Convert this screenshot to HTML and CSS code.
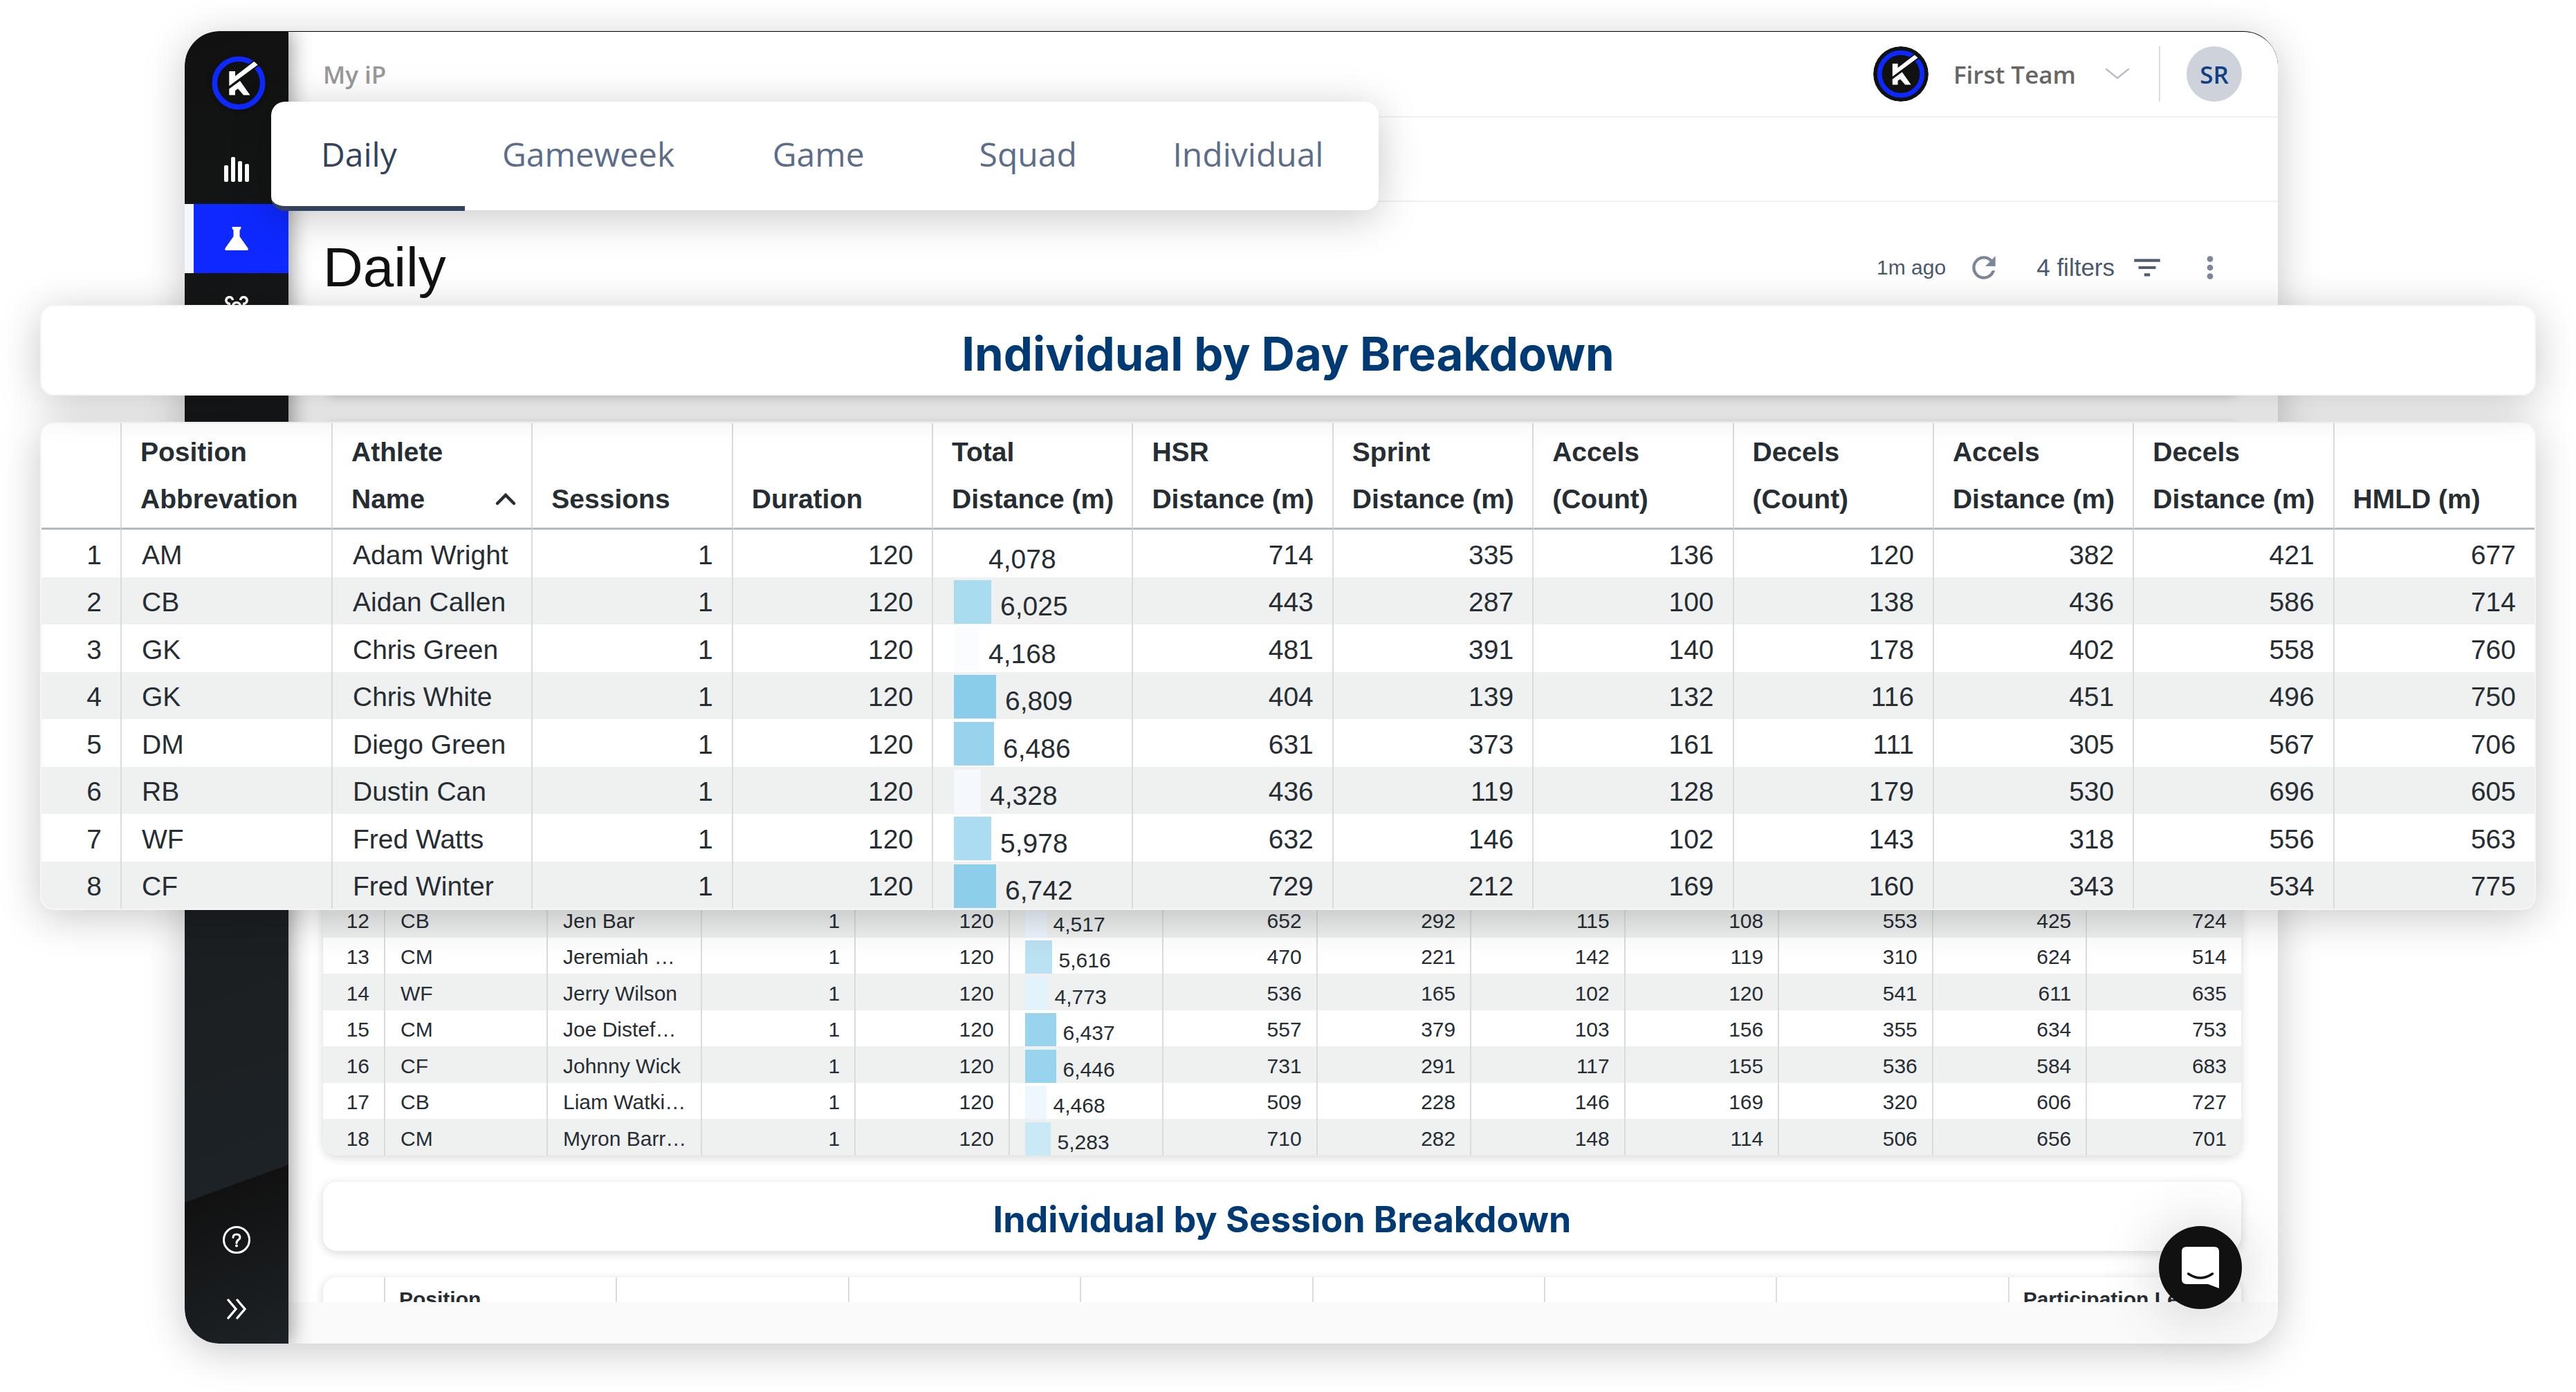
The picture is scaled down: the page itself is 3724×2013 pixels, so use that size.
FILE: index.html
```html
<!DOCTYPE html>
<html lang="en">
<head>
<meta charset="utf-8">
<title>Daily</title>
<link rel="stylesheet" href="styles.css">
</head>
<body>
<svg width="0" height="0" class="defs" aria-hidden="true">
  <symbol id="logo" viewBox="0 0 90 90">
    <circle cx="45" cy="45" r="45" fill="#111"/>
    <circle cx="45" cy="45" r="34.7" fill="none" stroke="#0d29ff" stroke-width="7.6"/>
    <path d="M40 35 67.300 14 72.700 18.700 31.300 49.300Z" fill="#111" stroke="#111" stroke-width="4"/>
    <path d="M31.300 28H40V35L67.300 14 72.700 18.700 31.300 49.300Z" fill="#fff"/>
    <path d="M31.300 53.500 47 42 61.500 62.500H52L44 53.300 40 56V62.500H31.300Z" fill="#fff"/>
  </symbol>
</svg>

<div class="window">
  <nav class="sidebar">
    <a class="brand" href="#"><svg width="90" height="90"><use href="#logo"/></svg></a>
    <a class="nav-item" href="#"><svg width="36" height="36" viewBox="0 0 36 36" fill="#fff"><rect x="0" y="12" width="6" height="24" rx="2"/><rect x="10" y="0" width="6" height="36" rx="2"/><rect x="20" y="6" width="6" height="30" rx="2"/><rect x="30" y="10" width="6" height="26" rx="2"/></svg></a>
    <a class="nav-item active" href="#"><svg width="34" height="34" viewBox="0 0 34 34" fill="#fff"><path d="M11 0H23Q24.500 1.500 21.500 5V14L33.500 31Q34.500 34 32 34H2Q-.5 34 .5 31L12.500 14V5Q9.500 1.500 11 0Z"/></svg></a>
    <a class="nav-item" href="#"><svg width="36" height="34" viewBox="0 0 36 34" fill="none" stroke="#fff" stroke-width="3.600"><path d="M9 11A4.800 4.800 0 1 1 12.500 6M27 11A4.800 4.800 0 1 0 23.500 6"/><circle cx="18" cy="15" r="5.500"/><path d="M4 32Q18 16 32 32"/></svg></a>
    <span class="spacer"></span>
    <a class="nav-item" href="#"><svg width="42" height="42" viewBox="0 0 42 42" fill="none" stroke="#fff" stroke-width="3"><circle cx="21" cy="21" r="18.500"/><path d="M16 17.500Q16 13 21 13T26 17.500C26 21 21 20.500 21 25.500" stroke-linecap="round"/><circle cx="21" cy="29.500" r="1" fill="#fff" stroke-width="2"/></svg></a>
    <a class="nav-item" href="#"><svg width="30" height="30" viewBox="0 0 30 30" fill="none" stroke="#fff" stroke-width="3.400" stroke-linecap="round"><path d="M3 2 14 15 3 28M16 2 27 15 16 28"/></svg></a>
  </nav>

  <main class="main">
    <header class="header">
      <span class="crumb">My iP</span>
      <svg class="team-logo" width="80" height="80"><use href="#logo"/></svg>
      <button class="team" type="button">First Team
        <svg width="36" height="18" viewBox="0 0 36 18" fill="none" stroke="#b9bfc4" stroke-width="2.500" stroke-linecap="round"><path d="M2 2 18 15 34 2"/></svg>
      </button>
      <span class="divider"></span>
      <button class="avatar" type="button">SR</button>
    </header>
    <div class="subheader"></div>

    <div class="toolbar">
      <h1>Daily</h1>
      <span class="ago">1m ago</span>
      <button class="refresh" type="button" aria-label="Refresh"><svg width="50" height="50" viewBox="0 0 24 24" fill="#7b8798"><path d="M17.650 6.350A7.960 7.960 0 0 0 12 4a8 8 0 1 0 7.730 10h-2.080A6 6 0 1 1 12 6c1.660 0 3.140.69 4.220 1.780L13 11h7V4z"/></svg></button>
      <button class="filters" type="button">4 filters <svg width="50" height="50" viewBox="0 0 24 24" fill="#505e73"><path d="M10 18h4v-2h-4zM3 6v2h18V6zm3 7h12v-2H6z"/></svg></button>
      <button type="button" aria-label="More"><svg width="50" height="50" viewBox="0 0 24 24" fill="#7b8798"><circle cx="12" cy="6" r="2.100"/><circle cx="12" cy="12" r="2.100"/><circle cx="12" cy="18" r="2.100"/></svg></button>
    </div>

    <div class="content">
      <div class="card banner"></div>
      <div class="card day-card">
        <table class="grid small">
          <colgroup><col class="c-num"><col class="c-pos"><col span="11"></colgroup>
          <tbody>
            <tr><td>12</td><td>CB</td><td>Jen Bar</td><td>1</td><td>120</td><td><div class="meter"><i style="width:31px;background:#edf6fe"></i><span>4,517</span></div></td><td>652</td><td>292</td><td>115</td><td>108</td><td>553</td><td>425</td><td>724</td></tr>
            <tr><td>13</td><td>CM</td><td>Jeremiah …</td><td>1</td><td>120</td><td><div class="meter"><i style="width:39px;background:#bbe2f3"></i><span>5,616</span></div></td><td>470</td><td>221</td><td>142</td><td>119</td><td>310</td><td>624</td><td>514</td></tr>
            <tr><td>14</td><td>WF</td><td>Jerry Wilson</td><td>1</td><td>120</td><td><div class="meter"><i style="width:33px;background:#e2f3fb"></i><span>4,773</span></div></td><td>536</td><td>165</td><td>102</td><td>120</td><td>541</td><td>611</td><td>635</td></tr>
            <tr><td>15</td><td>CM</td><td>Joe Distef…</td><td>1</td><td>120</td><td><div class="meter"><i style="width:45px;background:#99d4ee"></i><span>6,437</span></div></td><td>557</td><td>379</td><td>103</td><td>156</td><td>355</td><td>634</td><td>753</td></tr>
            <tr><td>16</td><td>CF</td><td>Johnny Wick</td><td>1</td><td>120</td><td><div class="meter"><i style="width:45px;background:#98d4ee"></i><span>6,446</span></div></td><td>731</td><td>291</td><td>117</td><td>155</td><td>536</td><td>584</td><td>683</td></tr>
            <tr><td>17</td><td>CB</td><td>Liam Watki…</td><td>1</td><td>120</td><td><div class="meter"><i style="width:31px;background:#eff7fe"></i><span>4,468</span></div></td><td>509</td><td>228</td><td>146</td><td>169</td><td>320</td><td>606</td><td>727</td></tr>
            <tr><td>18</td><td>CM</td><td>Myron Barr…</td><td>1</td><td>120</td><td><div class="meter"><i style="width:37px;background:#c9e9f7"></i><span>5,283</span></div></td><td>710</td><td>282</td><td>148</td><td>114</td><td>506</td><td>656</td><td>701</td></tr>
          </tbody>
        </table>
      </div>
      <h2 class="card banner">Individual by Session Breakdown</h2>
      <div class="card session-card">
        <table class="grid small session">
          <colgroup><col class="c-num"><col span="8"></colgroup>
          <thead><tr><th></th><th>Position</th><th></th><th></th><th></th><th></th><th></th><th></th><th>Participation Level</th></tr></thead>
        </table>
      </div>
    </div>
    <footer class="footer"></footer>
  </main>

  <button class="chat" type="button" aria-label="Open chat"><svg width="54" height="60" viewBox="0 0 54 60"><path d="M7 0H47Q54 0 54 7V60L38 54H7Q0 54 0 47V7Q0 0 7 0Z" fill="#fff"/><path d="M9.500 39Q27 51 44.500 39" fill="none" stroke="#111" stroke-width="3.400" stroke-linecap="round"/></svg></button>
</div>

<nav class="tabs">
  <a class="tab current" href="#">Daily</a>
  <a class="tab" href="#">Gameweek</a>
  <a class="tab" href="#">Game</a>
  <a class="tab" href="#">Squad</a>
  <a class="tab" href="#">Individual</a>
</nav>

<h2 class="float day-title">Individual by Day Breakdown</h2>

<div class="float day-table">
  <table class="grid large">
    <colgroup><col class="c-num"><col class="c-pos"><col span="11"></colgroup>
    <thead>
      <tr><th></th><th>Position<br>Abbrevation</th><th>Athlete<br><span class="sorted">Name <svg width="32" height="20" viewBox="0 0 32 20" fill="none" stroke="#262d33" stroke-width="4.500" stroke-linecap="round"><path d="M4 16 16 4 28 16"/></svg></span></th><th>Sessions</th><th>Duration</th><th>Total<br>Distance (m)</th><th>HSR<br>Distance (m)</th><th>Sprint<br>Distance (m)</th><th>Accels<br>(Count)</th><th>Decels<br>(Count)</th><th>Accels<br>Distance (m)</th><th>Decels<br>Distance (m)</th><th>HMLD (m)</th></tr>
    </thead>
    <tbody>
      <tr><td>1</td><td>AM</td><td>Adam Wright</td><td>1</td><td>120</td><td><div class="meter"><i style="width:37px;background:#ffffff"></i><span>4,078</span></div></td><td>714</td><td>335</td><td>136</td><td>120</td><td>382</td><td>421</td><td>677</td></tr>
      <tr><td>2</td><td>CB</td><td>Aidan Callen</td><td>1</td><td>120</td><td><div class="meter"><i style="width:54px;background:#aadcf0"></i><span>6,025</span></div></td><td>443</td><td>287</td><td>100</td><td>138</td><td>436</td><td>586</td><td>714</td></tr>
      <tr><td>3</td><td>GK</td><td>Chris Green</td><td>1</td><td>120</td><td><div class="meter"><i style="width:37px;background:#fbfcff"></i><span>4,168</span></div></td><td>481</td><td>391</td><td>140</td><td>178</td><td>402</td><td>558</td><td>760</td></tr>
      <tr><td>4</td><td>GK</td><td>Chris White</td><td>1</td><td>120</td><td><div class="meter"><i style="width:61px;background:#89cdea"></i><span>6,809</span></div></td><td>404</td><td>139</td><td>132</td><td>116</td><td>451</td><td>496</td><td>750</td></tr>
      <tr><td>5</td><td>DM</td><td>Diego Green</td><td>1</td><td>120</td><td><div class="meter"><i style="width:58px;background:#97d3ed"></i><span>6,486</span></div></td><td>631</td><td>373</td><td>161</td><td>111</td><td>305</td><td>567</td><td>706</td></tr>
      <tr><td>6</td><td>RB</td><td>Dustin Can</td><td>1</td><td>120</td><td><div class="meter"><i style="width:39px;background:#f5f9fe"></i><span>4,328</span></div></td><td>436</td><td>119</td><td>128</td><td>179</td><td>530</td><td>696</td><td>605</td></tr>
      <tr><td>7</td><td>WF</td><td>Fred Watts</td><td>1</td><td>120</td><td><div class="meter"><i style="width:54px;background:#acdcf1"></i><span>5,978</span></div></td><td>632</td><td>146</td><td>102</td><td>143</td><td>318</td><td>556</td><td>563</td></tr>
      <tr><td>8</td><td>CF</td><td>Fred Winter</td><td>1</td><td>120</td><td><div class="meter"><i style="width:61px;background:#8dcfeb"></i><span>6,742</span></div></td><td>729</td><td>212</td><td>169</td><td>160</td><td>343</td><td>534</td><td>775</td></tr>
    </tbody>
  </table>
</div>
</body>
</html>
```
FILE: styles.css
```css
* { box-sizing: border-box; }

body {
  position: relative;
  margin: 0;
  min-height: 100vh;
  padding: 45px 431px 70px 267px;
  background: #fff;
  color: #262d33;
  font-family: "Liberation Sans", Arial, sans-serif;
  overflow: hidden;
}

.defs { position: absolute; }
svg { display: block; flex: none; }
a { color: inherit; text-decoration: none; }
h1, h2 { margin: 0; }

button {
  padding: 0;
  border: 0;
  background: none;
  color: inherit;
  font: inherit;
  cursor: pointer;
}

/* application window */
.window {
  position: relative;
  display: flex;
  height: calc(100vh - 115px);
  border-radius: 50px;
  background: #fff;
  box-shadow: 0 10px 60px rgba(0, 0, 0, .22);
}

.sidebar {
  z-index: 1;
  display: flex;
  flex: none;
  flex-direction: column;
  width: 150px;
  border-radius: 50px 0 0 50px;
  background: linear-gradient(160deg, #111 0, #151718 25%, #1d2226 86.7%, #111 86.8%, #1d2226 100%);
  box-shadow: 4px 0 30px rgba(0, 0, 0, .4);
  clip-path: inset(0 -60px 0 0 round 50px 0 0 50px);
}

.brand, .nav-item {
  display: flex;
  align-items: center;
  justify-content: center;
  height: 100px;
}
.brand { height: 150px; padding-left: 6px; }
.nav-item.active {
  background: #0d29ff;
  box-shadow: inset 13px 0 #f4f8fc;
}
.spacer { flex: 1; }

.main {
  display: flex;
  flex: 1;
  flex-direction: column;
  min-width: 0;
  border-top: 1px solid #000;
  border-radius: 0 50px 50px 0;
  overflow: hidden;
}

.header {
  display: flex;
  flex: none;
  align-items: center;
  height: 124px;
  padding: 0 52px 0 50px;
  border-bottom: 2px solid #f1f1f1;
  font-family: "Open Sans", sans-serif;
  font-size: 35px;
}
.crumb { color: #999; font-weight: 600; }
.team-logo { margin-left: auto; border-radius: 50%; }
.team {
  display: flex;
  align-items: center;
  gap: 42px;
  margin: 0 42px 0 36px;
  color: #666;
  font-weight: 600;
}
.divider { width: 2px; height: 80px; margin-right: 38px; background: #dcdcdc; }
.avatar {
  width: 80px;
  height: 80px;
  border-radius: 50%;
  background: #ced3db;
  color: #0f3f84;
  font-weight: 600;
}

.subheader { flex: none; height: 122px; border-bottom: 2px solid #f1f1f1; }

.toolbar {
  display: flex;
  flex: none;
  align-items: center;
  height: 179px;
  padding: 10px 73px 0 50px;
  color: #4a586e;
}
.toolbar h1 { margin-right: auto; color: #111; font-size: 80px; font-weight: 400; }
.ago { font-size: 30px; }
.refresh { margin: 0 51px 0 30px; }
.filters {
  display: flex;
  align-items: center;
  gap: 22px;
  margin-right: 41px;
  font-size: 35px;
}

.content {
  display: flex;
  flex: 1;
  flex-direction: column;
  gap: 38px;
  min-height: 0;
  padding: 0 53px 0 50px;
  overflow: hidden;
}

.card {
  flex: none;
  border-radius: 20px;
  background: #fff;
  box-shadow: 0 3px 14px rgba(0, 0, 0, .16);
}
.banner {
  display: flex;
  align-items: center;
  justify-content: center;
  height: 100px;
  padding-top: 8px;
  color: #003a75;
  font: 700 52px Inter, sans-serif;
}
.day-card {
  display: flex;
  flex-direction: column;
  justify-content: flex-end;
  height: 1062px;
  overflow: hidden;
}
.session-card { overflow: hidden; }

.footer { flex: none; height: 60px; background: #fafafa; }

.chat {
  position: absolute;
  right: 52px;
  bottom: 50px;
  z-index: 2;
  display: flex;
  align-items: center;
  justify-content: center;
  width: 120px;
  height: 120px;
  border-radius: 50%;
  background: #111;
  box-shadow: 0 4px 90px rgba(0, 0, 0, .2);
}

/* data tables */
.grid {
  width: 100%;
  border-spacing: 0;
  table-layout: fixed;
  white-space: nowrap;
}
.grid th, .grid td {
  border-right: 2px solid #d9dcdd;
  text-align: right;
}
.grid th { text-align: left; vertical-align: bottom; }
.grid th:last-child, .grid td:last-child { border-right: 0; }
.grid td:nth-child(2), .grid td:nth-child(3) { text-align: left; }
.grid tbody tr:nth-child(even) { background: #eff1f1; }

.meter { display: flex; align-items: center; }

.small { font-size: 30px; }
.small .c-num { width: 90px; }
.small .c-pos { width: 235px; }
.small td { height: 52px; padding: 4px 21px 0 22px; }
.small tr:nth-child(odd) td { height: 53px; }
.small tbody tr:nth-child(odd) { background: #eff1f1; }
.small tbody tr:nth-child(even) { background: #fff; }
.small .meter { gap: 10px; }
.small .meter i { height: 48px; }
.small .meter span { padding-top: 10px; }
.session th { height: 70px; padding: 15px 20px 0; vertical-align: top; }

.large { font-size: 39px; }
.large .c-num { width: 116px; }
.large .c-pos { width: 305px; }
.large th {
  height: 154px;
  padding: 0 21px 7px 27px;
  border-bottom: 3px solid #b4bbc0;
  line-height: 68px;
}
.large td { height: 68px; padding: 4px 27px 0 29px; }
.large td:nth-child(6) { padding: 2px 27px 0 30px; }
.large tr:nth-child(odd) td { height: 69px; }
.large .meter { gap: 13px; }
.large .meter i { height: 63px; }
.large .meter span { padding-top: 14px; }
.sorted { display: flex; align-items: center; justify-content: space-between; }

/* raised panels */
.tabs {
  position: absolute;
  top: 147px;
  left: 392px;
  z-index: 3;
  display: grid;
  grid-template-columns: 280fr 391fr 299fr 280fr 352fr;
  width: 43%;
  height: 157px;
  border-radius: 20px;
  background: #fff;
  box-shadow: 0 10px 60px rgba(0, 0, 0, .22);
  color: #5b6d88;
  font: 500 48px "Open Sans", sans-serif;
}
.tab { padding-left: 54px; line-height: 151px; }
.tab.current {
  padding-left: 72px;
  border-bottom: 7px solid #34435c;
  border-bottom-left-radius: 20px;
  color: #34435c;
}

.float {
  position: absolute;
  right: 58px;
  left: 58px;
  border: 2px solid #f6f6f6;
  border-radius: 20px;
  background: #fff;
  box-shadow: 0 10px 60px rgba(0, 0, 0, .22);
}
.day-title {
  top: 441px;
  z-index: 5;
  display: flex;
  align-items: center;
  justify-content: center;
  height: 131px;
  padding-top: 10px;
  color: #003a75;
  font: 700 67px Inter, sans-serif;
}
.day-table {
  top: 610px;
  z-index: 4;
  overflow: hidden;
}
```
